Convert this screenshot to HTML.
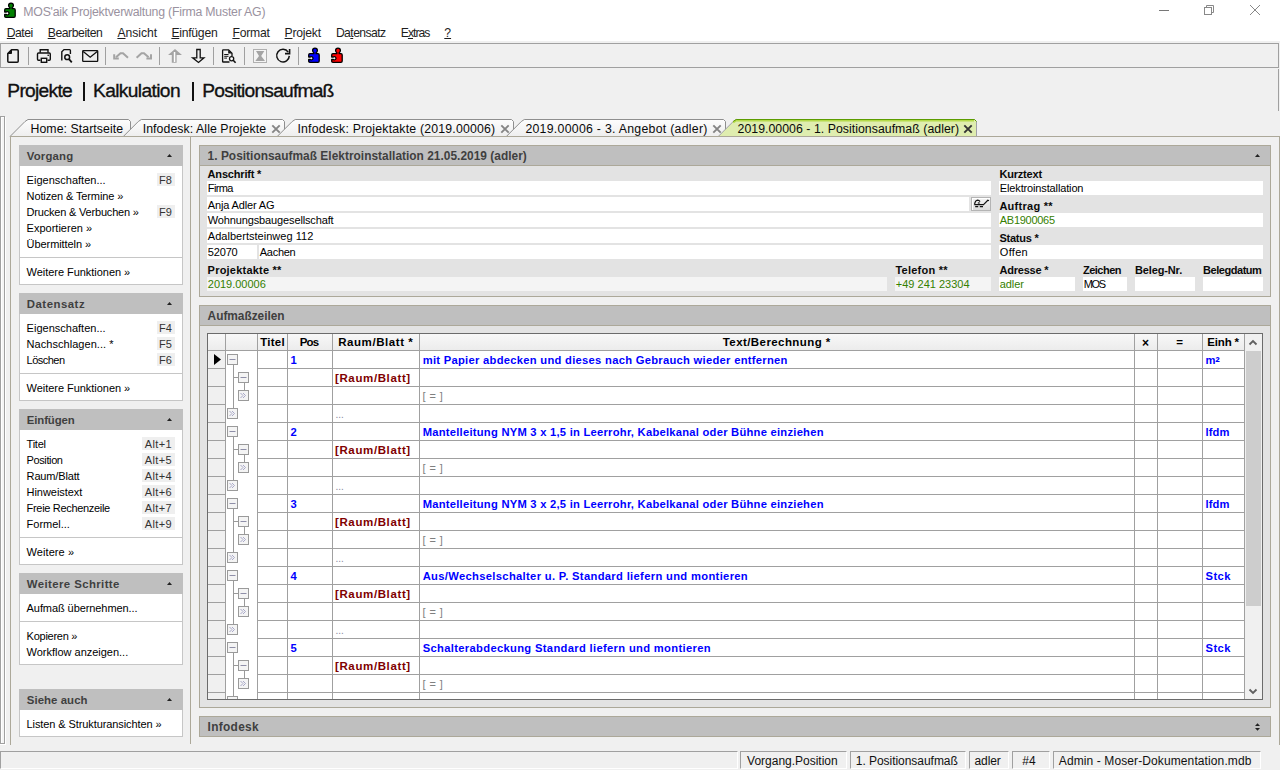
<!DOCTYPE html>
<html><head><meta charset="utf-8"><style>
html,body{margin:0;padding:0;width:1280px;height:770px;overflow:hidden;background:#f0f0f0;position:relative}
.t{position:absolute;white-space:nowrap;font-family:"Liberation Sans",sans-serif}
.r{position:absolute}
u{text-decoration:underline;text-underline-offset:1px;text-decoration-thickness:1px}
</style></head><body>
<div class="r" style="left:0px;top:0px;width:1280px;height:41px;background:#fff"></div>
<svg class="r" style="left:3px;top:2px;" width="14" height="17" viewBox="0 0 14 17"><path d="M1.7 7.9Q1.7 6.7 2.9 6.7H6.8V5.6Q5.6 5 5.6 3.5A2.4 2.4 0 0 1 10.4 3.5Q10.4 5 9.2 5.6V6.7H11Q12.2 6.7 12.2 7.9V14.1Q12.2 15.3 11 15.3H2.9Q1.7 15.3 1.7 14.1V12.5H3.4A1.6 1.6 0 1 0 3.4 10H1.7Z" fill="#008000" stroke="#000" stroke-width="1.3" stroke-linejoin="round"/></svg>
<div class="t " style="left:23.3px;top:6px;font-size:12.3px;line-height:12.3px;font-weight:400;color:#9a92a0;letter-spacing:-0.228px;">MOS'aik Projektverwaltung (Firma Muster AG)</div>
<div class="r" style="left:1159px;top:10px;width:10px;height:1px;background:#777"></div>
<svg class="r" style="left:1203px;top:4px;" width="12" height="12" viewBox="0 0 12 12"><rect x="1.5" y="3.5" width="7" height="7" fill="none" stroke="#888"/><path d="M3.5 3.5v-2h7v7h-2" fill="none" stroke="#888"/></svg>
<svg class="r" style="left:1249px;top:4px;" width="12" height="12" viewBox="0 0 12 12"><path d="M1 1l10 10M11 1l-10 10" stroke="#888" stroke-width="1"/></svg>
<div class="t " style="left:6.8px;top:27px;font-size:12.2px;line-height:12.2px;font-weight:400;color:#1e1e1e;letter-spacing:-0.538px;"><u>D</u>atei</div>
<div class="t " style="left:47.699999999999996px;top:27px;font-size:12.2px;line-height:12.2px;font-weight:400;color:#1e1e1e;letter-spacing:-0.428px;"><u>B</u>earbeiten</div>
<div class="t " style="left:117.39999999999999px;top:27px;font-size:12.2px;line-height:12.2px;font-weight:400;color:#1e1e1e;letter-spacing:-0.028px;"><u>A</u>nsicht</div>
<div class="t " style="left:171.4px;top:27px;font-size:12.2px;line-height:12.2px;font-weight:400;color:#1e1e1e;letter-spacing:-0.261px;"><u>E</u>infügen</div>
<div class="t " style="left:232.4px;top:27px;font-size:12.2px;line-height:12.2px;font-weight:400;color:#1e1e1e;letter-spacing:-0.222px;"><u>F</u>ormat</div>
<div class="t " style="left:284.6px;top:27px;font-size:12.2px;line-height:12.2px;font-weight:400;color:#1e1e1e;letter-spacing:-0.24px;"><u>P</u>rojekt</div>
<div class="t " style="left:335.90000000000003px;top:27px;font-size:12.2px;line-height:12.2px;font-weight:400;color:#1e1e1e;letter-spacing:-0.572px;">Da<u>t</u>ensatz</div>
<div class="t " style="left:400.8px;top:27px;font-size:12.2px;line-height:12.2px;font-weight:400;color:#1e1e1e;letter-spacing:-1.009px;">E<u>x</u>tras</div>
<div class="t " style="left:444.3px;top:27px;font-size:12.2px;line-height:12.2px;font-weight:400;color:#1e1e1e;"><u>?</u></div>
<div class="r" style="left:0px;top:42px;width:1280px;height:728px;background:#f0f0f0"></div>
<div class="r" style="left:0px;top:43px;width:1279px;height:25px;border:1px solid #a0a0a0;box-sizing:border-box;background:#f0f0f0"></div>
<div class="r" style="left:28px;top:47px;width:1px;height:18px;background:#a0a0a0"></div>
<div class="r" style="left:105px;top:47px;width:1px;height:18px;background:#a0a0a0"></div>
<div class="r" style="left:159px;top:47px;width:1px;height:18px;background:#a0a0a0"></div>
<div class="r" style="left:213px;top:47px;width:1px;height:18px;background:#a0a0a0"></div>
<div class="r" style="left:244px;top:47px;width:1px;height:18px;background:#a0a0a0"></div>
<div class="r" style="left:298px;top:47px;width:1px;height:18px;background:#a0a0a0"></div>
<svg class="r" style="left:0;top:43px" width="360" height="25" viewBox="0 43 360 25"><path d="M11.5 49.8H17.2Q18.2 49.8 18.2 50.8V61.2Q18.2 62.2 17.2 62.2H8.8Q7.8 62.2 7.8 61.2V53.5Z" fill="none" stroke="#111" stroke-width="1.5" stroke-linejoin="round"/><path d="M8 53.5L11.5 50V53.5Z" fill="#111" stroke="#111" stroke-width="1"/><path d="M40.2 52.8V49.8H48V52.8" fill="none" stroke="#111" stroke-width="1.4"/><path d="M40.5 60.2H38.5Q37.5 60.2 37.5 59.2V54Q37.5 53 38.5 53H49.3Q50.3 53 50.3 54V59.2Q50.3 60.2 49.3 60.2H47.5" fill="none" stroke="#111" stroke-width="1.4"/><rect x="41.3" y="58.3" width="5.4" height="4" fill="none" stroke="#111" stroke-width="1.4"/><rect x="47.5" y="54.6" width="1.4" height="1.4" fill="#111"/><path d="M62.5 59.8H61.8V51.8L64 49.6H69.6Q70.4 49.6 70.4 50.4V54" fill="none" stroke="#111" stroke-width="1.4"/><circle cx="67.2" cy="57.2" r="2.4" fill="none" stroke="#111" stroke-width="1.5"/><path d="M69 59.2L71.8 62.3" stroke="#111" stroke-width="1.8"/><rect x="82.7" y="50.7" width="15" height="10.6" rx="0.6" fill="none" stroke="#111" stroke-width="1.3"/><path d="M83.2 51.4L90.2 57.2L97.2 51.4" fill="none" stroke="#111" stroke-width="1.3"/><path d="M116 57.2L120.5 53.2H123L128 57.8" fill="none" stroke="#a4a4a4" stroke-width="2"/><path d="M114.2 54.2V58.6H118.8" fill="none" stroke="#a4a4a4" stroke-width="2"/><path d="M136.6 57.8L141.5 53.2H144L148.6 57.2" fill="none" stroke="#a4a4a4" stroke-width="2"/><path d="M151 54.2V58.6H146.4" fill="none" stroke="#a4a4a4" stroke-width="2"/><path d="M175 49L182 55H176.6V62.8H171.8V55H168Z" fill="#a4a4a4"/><rect x="173.8" y="52" width="1.5" height="10" fill="#fff"/><path d="M196.8 49.5H200.2V57.8H204L198.5 62.5L192.6 57.8H196.8Z" fill="none" stroke="#111" stroke-width="1.3" stroke-linejoin="miter"/><path d="M229.5 62H223.2Q222.6 62 222.6 61.4V50.4Q222.6 49.8 223.2 49.8H228.6L232 53.2V56" fill="none" stroke="#111" stroke-width="1.3"/><path d="M228.2 50V53.6H232Z" fill="#111"/><path d="M224.2 54.5H228.5M224.2 56.3H228.5M224.2 58.1H227" stroke="#111" stroke-width="1"/><circle cx="231.6" cy="58.7" r="2.1" fill="#fff" stroke="#111" stroke-width="1.3"/><path d="M233.2 60.3L235.6 62.8" stroke="#111" stroke-width="1.6"/><rect x="253.5" y="49.5" width="13" height="13" fill="#f4f4f4" stroke="#b0b0b0"/><path d="M256 51H264.3L261.2 56L265 61H255.3L259 56Z" fill="#a4a4a4"/><path d="M289.3 55.9A6.3 6.3 0 1 1 288.2 52.1" fill="none" stroke="#111" stroke-width="1.5"/><path d="M289.6 49V53.6H285" fill="none" stroke="#111" stroke-width="1.6"/></svg>
<svg class="r" style="left:307px;top:47px;" width="14" height="17" viewBox="0 0 14 17"><path d="M1.7 7.9Q1.7 6.7 2.9 6.7H6.8V5.6Q5.6 5 5.6 3.5A2.4 2.4 0 0 1 10.4 3.5Q10.4 5 9.2 5.6V6.7H11Q12.2 6.7 12.2 7.9V14.1Q12.2 15.3 11 15.3H2.9Q1.7 15.3 1.7 14.1V12.5H3.4A1.6 1.6 0 1 0 3.4 10H1.7Z" fill="#0000ff" stroke="#000" stroke-width="1.3" stroke-linejoin="round"/></svg>
<svg class="r" style="left:330px;top:47px;" width="14" height="17" viewBox="0 0 14 17"><path d="M1.7 7.9Q1.7 6.7 2.9 6.7H6.8V5.6Q5.6 5 5.6 3.5A2.4 2.4 0 0 1 10.4 3.5Q10.4 5 9.2 5.6V6.7H11Q12.2 6.7 12.2 7.9V14.1Q12.2 15.3 11 15.3H2.9Q1.7 15.3 1.7 14.1V12.5H3.4A1.6 1.6 0 1 0 3.4 10H1.7Z" fill="#ff0000" stroke="#000" stroke-width="1.3" stroke-linejoin="round"/></svg>
<div class="t " style="left:7.3px;top:81px;font-size:19.2px;line-height:19.2px;font-weight:400;color:#111;letter-spacing:-0.699px;-webkit-text-stroke:0.35px #111;">Projekte</div>
<div class="r" style="left:83px;top:82px;width:2px;height:19px;background:#111"></div>
<div class="t " style="left:93px;top:81px;font-size:19.2px;line-height:19.2px;font-weight:400;color:#111;letter-spacing:-0.628px;-webkit-text-stroke:0.35px #111;">Kalkulation</div>
<div class="r" style="left:192px;top:82px;width:2px;height:19px;background:#111"></div>
<div class="t " style="left:202.3px;top:81px;font-size:19.2px;line-height:19.2px;font-weight:400;color:#111;letter-spacing:-0.779px;-webkit-text-stroke:0.35px #111;">Positionsaufmaß</div>
<div class="r" style="left:1278px;top:69px;width:1px;height:42px;background:#a0a0a0"></div>
<div class="r" style="left:0px;top:116px;width:5px;height:628px;border:1px solid #a0a0a0;box-sizing:border-box;background:#f4f4f4;box-shadow:inset 1px 1px 0 #fff"></div>
<div class="r" style="left:5px;top:117px;width:1px;height:628px;background:#fff"></div>
<div class="r" style="left:0px;top:744px;width:6px;height:1px;background:#fff"></div>
<div class="r" style="left:10px;top:136px;width:1270px;height:609px;border-left:1px solid #aca899;border-top:1px solid #aca899;border-right:1px solid #aca899;box-sizing:border-box;background:#f0f0f0"></div>
<div class="r" style="left:190px;top:137px;width:1px;height:607px;background:#aca899"></div>
<svg class="r" style="left:9px;top:116px" width="124" height="21" viewBox="0 0 124 21"><defs><linearGradient id="g9" x1="0" y1="0" x2="0" y2="1"><stop offset="0" stop-color="#fdfdfd"/><stop offset="1" stop-color="#eeeeee"/></linearGradient></defs><path d="M1.00 20.50 L16.00 5.50 L19.00 3.50 H119.50 L121.50 5.50 V20.50" fill="url(#g9)" stroke="#8e8e8e" stroke-width="1"/></svg>
<div class="t " style="left:30.5px;top:123px;font-size:12.3px;line-height:12.3px;font-weight:400;color:#0a0a0a;letter-spacing:0.067px;">Home: Startseite</div>
<svg class="r" style="left:122px;top:116px" width="165" height="21" viewBox="0 0 165 21"><defs><linearGradient id="g122" x1="0" y1="0" x2="0" y2="1"><stop offset="0" stop-color="#fdfdfd"/><stop offset="1" stop-color="#eeeeee"/></linearGradient></defs><path d="M1.30 20.50 L16.30 5.50 L19.30 3.50 H160.50 L162.50 5.50 V20.50" fill="url(#g122)" stroke="#8e8e8e" stroke-width="1"/></svg>
<div class="t " style="left:142.7px;top:123px;font-size:12.3px;line-height:12.3px;font-weight:400;color:#0a0a0a;letter-spacing:0.074px;">Infodesk: Alle Projekte</div>
<svg class="r" style="left:270.5px;top:123.5px;" width="10" height="10" viewBox="0 0 10 10"><path d="M1.3 1.3l7.4 7.4M8.7 1.3l-7.4 7.4" stroke="#858585" stroke-width="1.9"/></svg>
<svg class="r" style="left:276px;top:116px" width="240" height="21" viewBox="0 0 240 21"><defs><linearGradient id="g276" x1="0" y1="0" x2="0" y2="1"><stop offset="0" stop-color="#fdfdfd"/><stop offset="1" stop-color="#eeeeee"/></linearGradient></defs><path d="M1.20 20.50 L16.20 5.50 L19.20 3.50 H235.50 L237.50 5.50 V20.50" fill="url(#g276)" stroke="#8e8e8e" stroke-width="1"/></svg>
<div class="t " style="left:297.4px;top:123px;font-size:12.3px;line-height:12.3px;font-weight:400;color:#0a0a0a;letter-spacing:0.193px;">Infodesk: Projektakte (2019.00006)</div>
<svg class="r" style="left:499.5px;top:123.5px;" width="10" height="10" viewBox="0 0 10 10"><path d="M1.3 1.3l7.4 7.4M8.7 1.3l-7.4 7.4" stroke="#858585" stroke-width="1.9"/></svg>
<svg class="r" style="left:505px;top:116px" width="223" height="21" viewBox="0 0 223 21"><defs><linearGradient id="g505" x1="0" y1="0" x2="0" y2="1"><stop offset="0" stop-color="#fdfdfd"/><stop offset="1" stop-color="#eeeeee"/></linearGradient></defs><path d="M1.30 20.50 L16.30 5.50 L19.30 3.50 H218.50 L220.50 5.50 V20.50" fill="url(#g505)" stroke="#8e8e8e" stroke-width="1"/></svg>
<div class="t " style="left:525.4px;top:123px;font-size:12.3px;line-height:12.3px;font-weight:400;color:#0a0a0a;letter-spacing:0.278px;">2019.00006 - 3. Angebot (adler)</div>
<svg class="r" style="left:711.5px;top:123.5px;" width="10" height="10" viewBox="0 0 10 10"><path d="M1.3 1.3l7.4 7.4M8.7 1.3l-7.4 7.4" stroke="#858585" stroke-width="1.9"/></svg>
<svg class="r" style="left:717px;top:116px" width="262" height="21" viewBox="0 0 262 21"><path d="M1.20 20.50 L16.20 5.50 L19.20 3.50 H257.50 L259.50 5.50 V20.50" fill="#dfedaf" stroke="#a0a0a8" stroke-width="1"/><path d="M16.20 6.50 L19.20 4.50 H257.00" fill="none" stroke="#b4da4a" stroke-width="2"/><path d="M16.20 5.50 L19.20 3.50 H257.50 L259.50 5.50" fill="none" stroke="#5c9c00" stroke-width="1"/></svg>
<div class="t " style="left:737.5px;top:123px;font-size:12.3px;line-height:12.3px;font-weight:400;color:#0a0a0a;letter-spacing:0.037px;">2019.00006 - 1. Positionsaufmaß (adler)</div>
<svg class="r" style="left:962.5px;top:123.5px;" width="10" height="10" viewBox="0 0 10 10"><path d="M1.3 1.3l7.4 7.4M8.7 1.3l-7.4 7.4" stroke="#333" stroke-width="1.9"/></svg>
<div class="r" style="left:10px;top:136px;width:1270px;height:1px;background:#aca899"></div>
<div class="r" style="left:19px;top:145px;width:164px;height:21px;background:#bfbfbf"></div>
<div class="t " style="left:26.8px;top:151px;font-size:11.4px;line-height:11.4px;font-weight:700;color:#3f3f3f;letter-spacing:0.173px;">Vorgang</div>
<svg class="r" style="left:166px;top:153px;" width="7" height="5" viewBox="0 0 7 5"><path d="M1 4L3.5 1L6 4z" fill="#222"/></svg>
<div class="r" style="left:19px;top:166px;width:164px;height:119px;background:#fff;border:1px solid #c6c6c6;border-top:none;box-sizing:border-box"></div>
<div class="r" style="left:157px;top:173px;width:18px;height:13px;background:#efefef"></div>
<div class="t " style="left:159px;top:175px;font-size:11px;line-height:11px;font-weight:400;color:#333;">F8</div>
<div class="t " style="left:26.6px;top:175px;font-size:11px;line-height:11px;font-weight:400;color:#000;letter-spacing:0.007px;">Eigenschaften...</div>
<div class="t " style="left:26.6px;top:191px;font-size:11px;line-height:11px;font-weight:400;color:#000;letter-spacing:-0.12px;">Notizen &amp; Termine »</div>
<div class="r" style="left:157px;top:205px;width:18px;height:13px;background:#efefef"></div>
<div class="t " style="left:159px;top:207px;font-size:11px;line-height:11px;font-weight:400;color:#333;">F9</div>
<div class="t " style="left:26.6px;top:207px;font-size:11px;line-height:11px;font-weight:400;color:#000;letter-spacing:-0.194px;">Drucken &amp; Verbuchen »</div>
<div class="t " style="left:26.6px;top:223px;font-size:11px;line-height:11px;font-weight:400;color:#000;letter-spacing:0.005px;">Exportieren »</div>
<div class="t " style="left:26.6px;top:239px;font-size:11px;line-height:11px;font-weight:400;color:#000;letter-spacing:-0.077px;">Übermitteln »</div>
<div class="r" style="left:20px;top:257px;width:162px;height:1px;background:#c6c6c6"></div>
<div class="t " style="left:26.6px;top:267px;font-size:11px;line-height:11px;font-weight:400;color:#000;letter-spacing:-0.04px;">Weitere Funktionen »</div>
<div class="r" style="left:19px;top:293px;width:164px;height:21px;background:#bfbfbf"></div>
<div class="t " style="left:26.8px;top:299px;font-size:11.4px;line-height:11.4px;font-weight:700;color:#3f3f3f;letter-spacing:0.498px;">Datensatz</div>
<svg class="r" style="left:166px;top:301px;" width="7" height="5" viewBox="0 0 7 5"><path d="M1 4L3.5 1L6 4z" fill="#222"/></svg>
<div class="r" style="left:19px;top:314px;width:164px;height:87px;background:#fff;border:1px solid #c6c6c6;border-top:none;box-sizing:border-box"></div>
<div class="r" style="left:157px;top:321px;width:18px;height:13px;background:#efefef"></div>
<div class="t " style="left:159px;top:323px;font-size:11px;line-height:11px;font-weight:400;color:#333;">F4</div>
<div class="t " style="left:26.6px;top:323px;font-size:11px;line-height:11px;font-weight:400;color:#000;letter-spacing:0.007px;">Eigenschaften...</div>
<div class="r" style="left:157px;top:337px;width:18px;height:13px;background:#efefef"></div>
<div class="t " style="left:159px;top:339px;font-size:11px;line-height:11px;font-weight:400;color:#333;">F5</div>
<div class="t " style="left:26.6px;top:339px;font-size:11px;line-height:11px;font-weight:400;color:#000;letter-spacing:0.043px;">Nachschlagen... *</div>
<div class="r" style="left:157px;top:353px;width:18px;height:13px;background:#efefef"></div>
<div class="t " style="left:159px;top:355px;font-size:11px;line-height:11px;font-weight:400;color:#333;">F6</div>
<div class="t " style="left:26.6px;top:355px;font-size:11px;line-height:11px;font-weight:400;color:#000;letter-spacing:-0.516px;">Löschen</div>
<div class="r" style="left:20px;top:373px;width:162px;height:1px;background:#c6c6c6"></div>
<div class="t " style="left:26.6px;top:383px;font-size:11px;line-height:11px;font-weight:400;color:#000;letter-spacing:-0.04px;">Weitere Funktionen »</div>
<div class="r" style="left:19px;top:409px;width:164px;height:21px;background:#bfbfbf"></div>
<div class="t " style="left:26.8px;top:415px;font-size:11.4px;line-height:11.4px;font-weight:700;color:#3f3f3f;letter-spacing:-0.119px;">Einfügen</div>
<svg class="r" style="left:166px;top:417px;" width="7" height="5" viewBox="0 0 7 5"><path d="M1 4L3.5 1L6 4z" fill="#222"/></svg>
<div class="r" style="left:19px;top:430px;width:164px;height:135px;background:#fff;border:1px solid #c6c6c6;border-top:none;box-sizing:border-box"></div>
<div class="r" style="left:142px;top:437px;width:33px;height:13px;background:#efefef"></div>
<div class="t " style="left:144.7px;top:439px;font-size:11px;line-height:11px;font-weight:400;color:#333;letter-spacing:0.402px;">Alt+1</div>
<div class="t " style="left:26.6px;top:439px;font-size:11px;line-height:11px;font-weight:400;color:#000;letter-spacing:-0.244px;">Titel</div>
<div class="r" style="left:142px;top:453px;width:33px;height:13px;background:#efefef"></div>
<div class="t " style="left:144.7px;top:455px;font-size:11px;line-height:11px;font-weight:400;color:#333;letter-spacing:0.402px;">Alt+5</div>
<div class="t " style="left:26.6px;top:455px;font-size:11px;line-height:11px;font-weight:400;color:#000;letter-spacing:-0.392px;">Position</div>
<div class="r" style="left:142px;top:469px;width:33px;height:13px;background:#efefef"></div>
<div class="t " style="left:144.7px;top:471px;font-size:11px;line-height:11px;font-weight:400;color:#333;letter-spacing:0.402px;">Alt+4</div>
<div class="t " style="left:26.6px;top:471px;font-size:11px;line-height:11px;font-weight:400;color:#000;letter-spacing:-0.158px;">Raum/Blatt</div>
<div class="r" style="left:142px;top:485px;width:33px;height:13px;background:#efefef"></div>
<div class="t " style="left:144.7px;top:487px;font-size:11px;line-height:11px;font-weight:400;color:#333;letter-spacing:0.402px;">Alt+6</div>
<div class="t " style="left:26.6px;top:487px;font-size:11px;line-height:11px;font-weight:400;color:#000;letter-spacing:-0.055px;">Hinweistext</div>
<div class="r" style="left:142px;top:501px;width:33px;height:13px;background:#efefef"></div>
<div class="t " style="left:144.7px;top:503px;font-size:11px;line-height:11px;font-weight:400;color:#333;letter-spacing:0.402px;">Alt+7</div>
<div class="t " style="left:26.6px;top:503px;font-size:11px;line-height:11px;font-weight:400;color:#000;letter-spacing:-0.316px;">Freie Rechenzeile</div>
<div class="r" style="left:142px;top:517px;width:33px;height:13px;background:#efefef"></div>
<div class="t " style="left:144.7px;top:519px;font-size:11px;line-height:11px;font-weight:400;color:#333;letter-spacing:0.402px;">Alt+9</div>
<div class="t " style="left:26.6px;top:519px;font-size:11px;line-height:11px;font-weight:400;color:#000;letter-spacing:-0.013px;">Formel...</div>
<div class="r" style="left:20px;top:537px;width:162px;height:1px;background:#c6c6c6"></div>
<div class="t " style="left:26.6px;top:547px;font-size:11px;line-height:11px;font-weight:400;color:#000;letter-spacing:0.066px;">Weitere »</div>
<div class="r" style="left:19px;top:573px;width:164px;height:21px;background:#bfbfbf"></div>
<div class="t " style="left:26.8px;top:579px;font-size:11.4px;line-height:11.4px;font-weight:700;color:#3f3f3f;letter-spacing:0.406px;">Weitere Schritte</div>
<svg class="r" style="left:166px;top:581px;" width="7" height="5" viewBox="0 0 7 5"><path d="M1 4L3.5 1L6 4z" fill="#222"/></svg>
<div class="r" style="left:19px;top:594px;width:164px;height:71px;background:#fff;border:1px solid #c6c6c6;border-top:none;box-sizing:border-box"></div>
<div class="t " style="left:26.6px;top:603px;font-size:11px;line-height:11px;font-weight:400;color:#000;letter-spacing:-0.08px;">Aufmaß übernehmen...</div>
<div class="r" style="left:20px;top:621px;width:162px;height:1px;background:#c6c6c6"></div>
<div class="t " style="left:26.6px;top:631px;font-size:11px;line-height:11px;font-weight:400;color:#000;letter-spacing:-0.258px;">Kopieren »</div>
<div class="t " style="left:26.6px;top:647px;font-size:11px;line-height:11px;font-weight:400;color:#000;letter-spacing:-0.016px;">Workflow anzeigen...</div>
<div class="r" style="left:19px;top:689px;width:164px;height:21px;background:#bfbfbf"></div>
<div class="t " style="left:26.8px;top:695px;font-size:11.4px;line-height:11.4px;font-weight:700;color:#3f3f3f;letter-spacing:0.062px;">Siehe auch</div>
<svg class="r" style="left:166px;top:697px;" width="7" height="5" viewBox="0 0 7 5"><path d="M1 4L3.5 1L6 4z" fill="#222"/></svg>
<div class="r" style="left:19px;top:710px;width:164px;height:27px;background:#fff;border:1px solid #c6c6c6;border-top:none;box-sizing:border-box"></div>
<div class="t " style="left:26.6px;top:719px;font-size:11px;line-height:11px;font-weight:400;color:#000;letter-spacing:-0.095px;">Listen &amp; Strukturansichten »</div>
<div class="r" style="left:199px;top:145px;width:1072px;height:152px;border:1px solid #aca899;box-sizing:border-box;background:#e3e3e3"></div>
<div class="r" style="left:200px;top:146px;width:1070px;height:20px;background:#bfbfbf;border-bottom:1px solid #aca899;box-sizing:border-box"></div>
<div class="t " style="left:207.6px;top:151px;font-size:11.9px;line-height:11.9px;font-weight:700;color:#3f3f3f;letter-spacing:0.024px;">1. Positionsaufmaß Elektroinstallation 21.05.2019 (adler)</div>
<svg class="r" style="left:1254px;top:153px;" width="7" height="5" viewBox="0 0 7 5"><path d="M1 4L3.5 1L6 4z" fill="#222"/></svg>
<div class="t " style="left:207.6px;top:169px;font-size:11px;line-height:11px;font-weight:700;color:#0a0a0a;letter-spacing:-0.183px;">Anschrift *</div>
<div class="r" style="left:207px;top:181px;width:784px;height:14px;background:#fff"></div>
<div class="t " style="left:207.8px;top:183px;font-size:11px;line-height:11px;font-weight:400;color:#000;letter-spacing:-0.627px;">Firma</div>
<div class="r" style="left:207px;top:197px;width:762px;height:14px;background:#fff"></div>
<div class="t " style="left:207.8px;top:200px;font-size:11px;line-height:11px;font-weight:400;color:#000;letter-spacing:-0.142px;">Anja Adler AG</div>
<div class="r" style="left:971px;top:197px;width:20px;height:14px;background:linear-gradient(#f4f4f4,#dcdcdc);border:1px solid #b4b4b4;box-shadow:inset 1px 1px 0 #fff;box-sizing:border-box"></div>
<svg class="r" style="left:971px;top:197px;" width="20" height="14" viewBox="0 0 20 14"><path d="M3.5 7.5Q4.3 3.4 6.6 3.2Q8.2 3.2 9 4.6M7 6.4Q7.7 5.4 8.6 6.4M3.4 7.6H13M4.2 9.6H7.2M8.8 9.6H12M12.8 7.4L16.8 3.3L18 3.8" fill="none" stroke="#111" stroke-width="1.2"/></svg>
<div class="r" style="left:207px;top:213px;width:784px;height:14px;background:#fff"></div>
<div class="t " style="left:207.8px;top:215px;font-size:11px;line-height:11px;font-weight:400;color:#000;letter-spacing:-0.134px;">Wohnungsbaugesellschaft</div>
<div class="r" style="left:207px;top:229px;width:784px;height:14px;background:#fff"></div>
<div class="t " style="left:207.8px;top:231px;font-size:11px;line-height:11px;font-weight:400;color:#000;letter-spacing:0.027px;">Adalbertsteinweg 112</div>
<div class="r" style="left:207px;top:245px;width:50px;height:14px;background:#fff"></div>
<div class="t " style="left:207.8px;top:247px;font-size:11px;line-height:11px;font-weight:400;color:#000;letter-spacing:-0.173px;">52070</div>
<div class="r" style="left:259px;top:245px;width:732px;height:14px;background:#fff"></div>
<div class="t " style="left:259.8px;top:247px;font-size:11px;line-height:11px;font-weight:400;color:#000;letter-spacing:-0.283px;">Aachen</div>
<div class="t " style="left:207.6px;top:265px;font-size:11px;line-height:11px;font-weight:700;color:#0a0a0a;letter-spacing:0.22px;">Projektakte **</div>
<div class="r" style="left:207px;top:277px;width:680px;height:14px;background:#f4f4f4"></div>
<div class="t " style="left:207.8px;top:279px;font-size:11px;line-height:11px;font-weight:400;color:#358000;letter-spacing:-0.014px;">2019.00006</div>
<div class="t " style="left:895.4px;top:265px;font-size:11px;line-height:11px;font-weight:700;color:#0a0a0a;letter-spacing:0.253px;">Telefon **</div>
<div class="r" style="left:895px;top:277px;width:96px;height:14px;background:#f4f4f4"></div>
<div class="t " style="left:895.8px;top:279px;font-size:11px;line-height:11px;font-weight:400;color:#358000;letter-spacing:0.007px;">+49 241 23304</div>
<div class="t " style="left:999.4px;top:169px;font-size:11px;line-height:11px;font-weight:700;color:#0a0a0a;letter-spacing:-0.188px;">Kurztext</div>
<div class="r" style="left:999px;top:181px;width:264px;height:14px;background:#fff"></div>
<div class="t " style="left:999.8px;top:183px;font-size:11px;line-height:11px;font-weight:400;color:#000;letter-spacing:-0.14px;">Elektroinstallation</div>
<div class="t " style="left:999.4px;top:201px;font-size:11px;line-height:11px;font-weight:700;color:#0a0a0a;letter-spacing:0.274px;">Auftrag **</div>
<div class="r" style="left:999px;top:213px;width:264px;height:14px;background:#fff"></div>
<div class="t " style="left:999.8px;top:215px;font-size:11px;line-height:11px;font-weight:400;color:#358000;letter-spacing:-0.287px;">AB1900065</div>
<div class="t " style="left:999.4px;top:233px;font-size:11px;line-height:11px;font-weight:700;color:#0a0a0a;letter-spacing:-0.224px;">Status *</div>
<div class="r" style="left:999px;top:245px;width:264px;height:14px;background:#fff"></div>
<div class="t " style="left:999.8px;top:247px;font-size:11px;line-height:11px;font-weight:400;color:#000;letter-spacing:0.295px;">Offen</div>
<div class="t " style="left:999.4px;top:265px;font-size:11px;line-height:11px;font-weight:700;color:#0a0a0a;letter-spacing:-0.196px;">Adresse *</div>
<div class="r" style="left:999px;top:277px;width:76px;height:14px;background:#fff"></div>
<div class="t " style="left:999.8px;top:279px;font-size:11px;line-height:11px;font-weight:400;color:#358000;letter-spacing:-0.117px;">adler</div>
<div class="t " style="left:1083px;top:265px;font-size:11px;line-height:11px;font-weight:700;color:#0a0a0a;letter-spacing:-0.513px;">Zeichen</div>
<div class="r" style="left:1083px;top:277px;width:44px;height:14px;background:#fff"></div>
<div class="t " style="left:1083.8px;top:279px;font-size:11px;line-height:11px;font-weight:400;color:#000;letter-spacing:-1.381px;">MOS</div>
<div class="t " style="left:1135px;top:265px;font-size:11px;line-height:11px;font-weight:700;color:#0a0a0a;letter-spacing:-0.137px;">Beleg-Nr.</div>
<div class="r" style="left:1135px;top:277px;width:60px;height:14px;background:#fff"></div>
<div class="t " style="left:1203px;top:265px;font-size:11px;line-height:11px;font-weight:700;color:#0a0a0a;letter-spacing:-0.452px;">Belegdatum</div>
<div class="r" style="left:1203px;top:277px;width:60px;height:14px;background:#fff"></div>
<div class="r" style="left:199px;top:305px;width:1072px;height:403px;border:1px solid #aca899;box-sizing:border-box;background:#e3e3e3"></div>
<div class="r" style="left:200px;top:306px;width:1070px;height:20px;background:#bfbfbf;border-bottom:1px solid #aca899;box-sizing:border-box"></div>
<div class="t " style="left:207.6px;top:311px;font-size:11.9px;line-height:11.9px;font-weight:700;color:#3f3f3f;letter-spacing:-0.028px;">Aufmaßzeilen</div>
<div class="r" style="left:207px;top:333px;width:1056px;height:367px;background:#fff;border:1px solid #6b6b6b;box-sizing:border-box"></div>
<div class="r" style="left:208px;top:334px;width:1054px;height:365px;overflow:hidden"><div class="r" style="left:-208px;top:-334px;width:1280px;height:770px">
<div class="r" style="left:208px;top:334px;width:1036px;height:16px;background:linear-gradient(#f8f8f8,#ececec)"></div>
<div class="r" style="left:208px;top:350px;width:1036px;height:1px;background:#a0a0a0"></div>
<div class="r" style="left:208px;top:351px;width:17px;height:348px;background:#f0f0f0"></div>
<div class="r" style="left:208px;top:368px;width:17px;height:1px;background:#a0a0a0"></div>
<div class="r" style="left:257px;top:368px;width:987px;height:1px;background:#a0a0a0"></div>
<div class="r" style="left:208px;top:386px;width:17px;height:1px;background:#a0a0a0"></div>
<div class="r" style="left:257px;top:386px;width:987px;height:1px;background:#a0a0a0"></div>
<div class="r" style="left:208px;top:404px;width:17px;height:1px;background:#a0a0a0"></div>
<div class="r" style="left:257px;top:404px;width:987px;height:1px;background:#a0a0a0"></div>
<div class="r" style="left:208px;top:422px;width:17px;height:1px;background:#a0a0a0"></div>
<div class="r" style="left:257px;top:422px;width:987px;height:1px;background:#a0a0a0"></div>
<div class="r" style="left:208px;top:440px;width:17px;height:1px;background:#a0a0a0"></div>
<div class="r" style="left:257px;top:440px;width:987px;height:1px;background:#a0a0a0"></div>
<div class="r" style="left:208px;top:458px;width:17px;height:1px;background:#a0a0a0"></div>
<div class="r" style="left:257px;top:458px;width:987px;height:1px;background:#a0a0a0"></div>
<div class="r" style="left:208px;top:476px;width:17px;height:1px;background:#a0a0a0"></div>
<div class="r" style="left:257px;top:476px;width:987px;height:1px;background:#a0a0a0"></div>
<div class="r" style="left:208px;top:494px;width:17px;height:1px;background:#a0a0a0"></div>
<div class="r" style="left:257px;top:494px;width:987px;height:1px;background:#a0a0a0"></div>
<div class="r" style="left:208px;top:512px;width:17px;height:1px;background:#a0a0a0"></div>
<div class="r" style="left:257px;top:512px;width:987px;height:1px;background:#a0a0a0"></div>
<div class="r" style="left:208px;top:530px;width:17px;height:1px;background:#a0a0a0"></div>
<div class="r" style="left:257px;top:530px;width:987px;height:1px;background:#a0a0a0"></div>
<div class="r" style="left:208px;top:548px;width:17px;height:1px;background:#a0a0a0"></div>
<div class="r" style="left:257px;top:548px;width:987px;height:1px;background:#a0a0a0"></div>
<div class="r" style="left:208px;top:566px;width:17px;height:1px;background:#a0a0a0"></div>
<div class="r" style="left:257px;top:566px;width:987px;height:1px;background:#a0a0a0"></div>
<div class="r" style="left:208px;top:584px;width:17px;height:1px;background:#a0a0a0"></div>
<div class="r" style="left:257px;top:584px;width:987px;height:1px;background:#a0a0a0"></div>
<div class="r" style="left:208px;top:602px;width:17px;height:1px;background:#a0a0a0"></div>
<div class="r" style="left:257px;top:602px;width:987px;height:1px;background:#a0a0a0"></div>
<div class="r" style="left:208px;top:620px;width:17px;height:1px;background:#a0a0a0"></div>
<div class="r" style="left:257px;top:620px;width:987px;height:1px;background:#a0a0a0"></div>
<div class="r" style="left:208px;top:638px;width:17px;height:1px;background:#a0a0a0"></div>
<div class="r" style="left:257px;top:638px;width:987px;height:1px;background:#a0a0a0"></div>
<div class="r" style="left:208px;top:656px;width:17px;height:1px;background:#a0a0a0"></div>
<div class="r" style="left:257px;top:656px;width:987px;height:1px;background:#a0a0a0"></div>
<div class="r" style="left:208px;top:674px;width:17px;height:1px;background:#a0a0a0"></div>
<div class="r" style="left:257px;top:674px;width:987px;height:1px;background:#a0a0a0"></div>
<div class="r" style="left:208px;top:692px;width:17px;height:1px;background:#a0a0a0"></div>
<div class="r" style="left:257px;top:692px;width:987px;height:1px;background:#a0a0a0"></div>
<div class="r" style="left:225px;top:334px;width:1px;height:365px;background:#a0a0a0"></div>
<div class="r" style="left:257px;top:334px;width:1px;height:365px;background:#a0a0a0"></div>
<div class="r" style="left:287px;top:334px;width:1px;height:365px;background:#a0a0a0"></div>
<div class="r" style="left:332px;top:334px;width:1px;height:365px;background:#a0a0a0"></div>
<div class="r" style="left:419px;top:334px;width:1px;height:365px;background:#a0a0a0"></div>
<div class="r" style="left:1134px;top:334px;width:1px;height:365px;background:#a0a0a0"></div>
<div class="r" style="left:1157px;top:334px;width:1px;height:365px;background:#a0a0a0"></div>
<div class="r" style="left:1202px;top:334px;width:1px;height:365px;background:#a0a0a0"></div>
<div class="r" style="left:1244px;top:334px;width:1px;height:365px;background:#a0a0a0"></div>
<div class="t " style="left:260.3px;top:337px;font-size:11.5px;line-height:11.5px;font-weight:700;color:#000;letter-spacing:0.241px;">Titel</div>
<div class="t" style="left:287px;width:45px;text-align:center;top:337px;font-size:11.5px;line-height:11.5px;font-weight:700;color:#000;letter-spacing:-0.797px;text-indent:-0.797px;">Pos</div>
<div class="t" style="left:332px;width:87px;text-align:center;top:337px;font-size:11.5px;line-height:11.5px;font-weight:700;color:#000;letter-spacing:0.566px;text-indent:0.566px;">Raum/Blatt *</div>
<div class="t" style="left:419px;width:715px;text-align:center;top:337px;font-size:11.5px;line-height:11.5px;font-weight:700;color:#000;letter-spacing:0.422px;text-indent:0.422px;">Text/Berechnung *</div>
<div class="t" style="left:1134px;width:23px;text-align:center;top:337px;font-size:12px;line-height:12px;font-weight:700;color:#000;">×</div>
<div class="t" style="left:1157px;width:45px;text-align:center;top:337px;font-size:11.5px;line-height:11.5px;font-weight:700;color:#000;">=</div>
<div class="t " style="left:1207.3px;top:337px;font-size:11.5px;line-height:11.5px;font-weight:700;color:#000;letter-spacing:-0.159px;">Einh *</div>
<div class="r" style="left:233px;top:365px;width:1px;height:44px;background:#9a9a9a"></div>
<div class="r" style="left:233px;top:377px;width:5px;height:1px;background:#9a9a9a"></div>
<div class="r" style="left:244px;top:383px;width:1px;height:7px;background:#9a9a9a"></div>
<svg class="r" style="left:227px;top:354px;" width="11" height="11" viewBox="0 0 11 11"><rect x="0.5" y="0.5" width="10" height="10" fill="#f4f4f4" stroke="#9a9a9a"/><path d="M2.5 5.5h6" stroke="#8f8fa8" stroke-width="1"/></svg>
<svg class="r" style="left:238px;top:372px;" width="11" height="11" viewBox="0 0 11 11"><rect x="0.5" y="0.5" width="10" height="10" fill="#f4f4f4" stroke="#9a9a9a"/><path d="M2.5 5.5h6" stroke="#8f8fa8" stroke-width="1"/></svg>
<svg class="r" style="left:238px;top:390px;" width="11" height="11" viewBox="0 0 11 11"><rect x="0.5" y="0.5" width="10" height="10" fill="#f4f4f4" stroke="#9a9a9a"/><path d="M2.5 3l2.5 2.5l-2.5 2.5M5 3l2.5 2.5l-2.5 2.5" fill="none" stroke="#a8a8c8" stroke-width="1"/></svg>
<svg class="r" style="left:227px;top:408px;" width="11" height="11" viewBox="0 0 11 11"><rect x="0.5" y="0.5" width="10" height="10" fill="#f4f4f4" stroke="#9a9a9a"/><path d="M2.5 3l2.5 2.5l-2.5 2.5M5 3l2.5 2.5l-2.5 2.5" fill="none" stroke="#a8a8c8" stroke-width="1"/></svg>
<div class="t " style="left:290.5px;top:355px;font-size:11.2px;line-height:11.2px;font-weight:700;color:#0000ff;">1</div>
<div class="t " style="left:422.7px;top:355px;font-size:11.2px;line-height:11.2px;font-weight:700;color:#0000ff;letter-spacing:0.286px;">mit Papier abdecken und dieses nach Gebrauch wieder entfernen</div>
<div class="t " style="left:1205.5px;top:355px;font-size:11.2px;line-height:11.2px;font-weight:700;color:#0000ff;">m</div>
<div class="t " style="left:1215.2px;top:355px;font-size:13.5px;line-height:13.5px;font-weight:700;color:#0000ff;">²</div>
<div class="t " style="left:335px;top:373px;font-size:11.5px;line-height:11.5px;font-weight:700;color:#800000;letter-spacing:0.62px;">[Raum/Blatt]</div>
<div class="t " style="left:422.5px;top:391px;font-size:11px;line-height:11px;font-weight:400;color:#808080;letter-spacing:0.386px;">[ = ]</div>
<div class="t " style="left:335.5px;top:410px;font-size:10px;line-height:10px;font-weight:400;color:#8888a0;">...</div>
<div class="r" style="left:233px;top:437px;width:1px;height:44px;background:#9a9a9a"></div>
<div class="r" style="left:233px;top:449px;width:5px;height:1px;background:#9a9a9a"></div>
<div class="r" style="left:244px;top:455px;width:1px;height:7px;background:#9a9a9a"></div>
<svg class="r" style="left:227px;top:426px;" width="11" height="11" viewBox="0 0 11 11"><rect x="0.5" y="0.5" width="10" height="10" fill="#f4f4f4" stroke="#9a9a9a"/><path d="M2.5 5.5h6" stroke="#8f8fa8" stroke-width="1"/></svg>
<svg class="r" style="left:238px;top:444px;" width="11" height="11" viewBox="0 0 11 11"><rect x="0.5" y="0.5" width="10" height="10" fill="#f4f4f4" stroke="#9a9a9a"/><path d="M2.5 5.5h6" stroke="#8f8fa8" stroke-width="1"/></svg>
<svg class="r" style="left:238px;top:462px;" width="11" height="11" viewBox="0 0 11 11"><rect x="0.5" y="0.5" width="10" height="10" fill="#f4f4f4" stroke="#9a9a9a"/><path d="M2.5 3l2.5 2.5l-2.5 2.5M5 3l2.5 2.5l-2.5 2.5" fill="none" stroke="#a8a8c8" stroke-width="1"/></svg>
<svg class="r" style="left:227px;top:480px;" width="11" height="11" viewBox="0 0 11 11"><rect x="0.5" y="0.5" width="10" height="10" fill="#f4f4f4" stroke="#9a9a9a"/><path d="M2.5 3l2.5 2.5l-2.5 2.5M5 3l2.5 2.5l-2.5 2.5" fill="none" stroke="#a8a8c8" stroke-width="1"/></svg>
<div class="t " style="left:290.5px;top:427px;font-size:11.2px;line-height:11.2px;font-weight:700;color:#0000ff;">2</div>
<div class="t " style="left:422.7px;top:427px;font-size:11.2px;line-height:11.2px;font-weight:700;color:#0000ff;letter-spacing:0.25px;">Mantelleitung NYM 3 x 1,5 in Leerrohr, Kabelkanal oder Bühne einziehen</div>
<div class="t " style="left:1205.5px;top:427px;font-size:11.2px;line-height:11.2px;font-weight:700;color:#0000ff;letter-spacing:0.125px;">lfdm</div>
<div class="t " style="left:335px;top:445px;font-size:11.5px;line-height:11.5px;font-weight:700;color:#800000;letter-spacing:0.62px;">[Raum/Blatt]</div>
<div class="t " style="left:422.5px;top:463px;font-size:11px;line-height:11px;font-weight:400;color:#808080;letter-spacing:0.386px;">[ = ]</div>
<div class="t " style="left:335.5px;top:482px;font-size:10px;line-height:10px;font-weight:400;color:#8888a0;">...</div>
<div class="r" style="left:233px;top:509px;width:1px;height:44px;background:#9a9a9a"></div>
<div class="r" style="left:233px;top:521px;width:5px;height:1px;background:#9a9a9a"></div>
<div class="r" style="left:244px;top:527px;width:1px;height:7px;background:#9a9a9a"></div>
<svg class="r" style="left:227px;top:498px;" width="11" height="11" viewBox="0 0 11 11"><rect x="0.5" y="0.5" width="10" height="10" fill="#f4f4f4" stroke="#9a9a9a"/><path d="M2.5 5.5h6" stroke="#8f8fa8" stroke-width="1"/></svg>
<svg class="r" style="left:238px;top:516px;" width="11" height="11" viewBox="0 0 11 11"><rect x="0.5" y="0.5" width="10" height="10" fill="#f4f4f4" stroke="#9a9a9a"/><path d="M2.5 5.5h6" stroke="#8f8fa8" stroke-width="1"/></svg>
<svg class="r" style="left:238px;top:534px;" width="11" height="11" viewBox="0 0 11 11"><rect x="0.5" y="0.5" width="10" height="10" fill="#f4f4f4" stroke="#9a9a9a"/><path d="M2.5 3l2.5 2.5l-2.5 2.5M5 3l2.5 2.5l-2.5 2.5" fill="none" stroke="#a8a8c8" stroke-width="1"/></svg>
<svg class="r" style="left:227px;top:552px;" width="11" height="11" viewBox="0 0 11 11"><rect x="0.5" y="0.5" width="10" height="10" fill="#f4f4f4" stroke="#9a9a9a"/><path d="M2.5 3l2.5 2.5l-2.5 2.5M5 3l2.5 2.5l-2.5 2.5" fill="none" stroke="#a8a8c8" stroke-width="1"/></svg>
<div class="t " style="left:290.5px;top:499px;font-size:11.2px;line-height:11.2px;font-weight:700;color:#0000ff;">3</div>
<div class="t " style="left:422.7px;top:499px;font-size:11.2px;line-height:11.2px;font-weight:700;color:#0000ff;letter-spacing:0.25px;">Mantelleitung NYM 3 x 2,5 in Leerrohr, Kabelkanal oder Bühne einziehen</div>
<div class="t " style="left:1205.5px;top:499px;font-size:11.2px;line-height:11.2px;font-weight:700;color:#0000ff;letter-spacing:0.125px;">lfdm</div>
<div class="t " style="left:335px;top:517px;font-size:11.5px;line-height:11.5px;font-weight:700;color:#800000;letter-spacing:0.62px;">[Raum/Blatt]</div>
<div class="t " style="left:422.5px;top:535px;font-size:11px;line-height:11px;font-weight:400;color:#808080;letter-spacing:0.386px;">[ = ]</div>
<div class="t " style="left:335.5px;top:554px;font-size:10px;line-height:10px;font-weight:400;color:#8888a0;">...</div>
<div class="r" style="left:233px;top:581px;width:1px;height:44px;background:#9a9a9a"></div>
<div class="r" style="left:233px;top:593px;width:5px;height:1px;background:#9a9a9a"></div>
<div class="r" style="left:244px;top:599px;width:1px;height:7px;background:#9a9a9a"></div>
<svg class="r" style="left:227px;top:570px;" width="11" height="11" viewBox="0 0 11 11"><rect x="0.5" y="0.5" width="10" height="10" fill="#f4f4f4" stroke="#9a9a9a"/><path d="M2.5 5.5h6" stroke="#8f8fa8" stroke-width="1"/></svg>
<svg class="r" style="left:238px;top:588px;" width="11" height="11" viewBox="0 0 11 11"><rect x="0.5" y="0.5" width="10" height="10" fill="#f4f4f4" stroke="#9a9a9a"/><path d="M2.5 5.5h6" stroke="#8f8fa8" stroke-width="1"/></svg>
<svg class="r" style="left:238px;top:606px;" width="11" height="11" viewBox="0 0 11 11"><rect x="0.5" y="0.5" width="10" height="10" fill="#f4f4f4" stroke="#9a9a9a"/><path d="M2.5 3l2.5 2.5l-2.5 2.5M5 3l2.5 2.5l-2.5 2.5" fill="none" stroke="#a8a8c8" stroke-width="1"/></svg>
<svg class="r" style="left:227px;top:624px;" width="11" height="11" viewBox="0 0 11 11"><rect x="0.5" y="0.5" width="10" height="10" fill="#f4f4f4" stroke="#9a9a9a"/><path d="M2.5 3l2.5 2.5l-2.5 2.5M5 3l2.5 2.5l-2.5 2.5" fill="none" stroke="#a8a8c8" stroke-width="1"/></svg>
<div class="t " style="left:290.5px;top:571px;font-size:11.2px;line-height:11.2px;font-weight:700;color:#0000ff;">4</div>
<div class="t " style="left:422.7px;top:571px;font-size:11.2px;line-height:11.2px;font-weight:700;color:#0000ff;letter-spacing:0.333px;">Aus/Wechselschalter u. P. Standard liefern und montieren</div>
<div class="t " style="left:1205.5px;top:571px;font-size:11.2px;line-height:11.2px;font-weight:700;color:#0000ff;letter-spacing:0.453px;">Stck</div>
<div class="t " style="left:335px;top:589px;font-size:11.5px;line-height:11.5px;font-weight:700;color:#800000;letter-spacing:0.62px;">[Raum/Blatt]</div>
<div class="t " style="left:422.5px;top:607px;font-size:11px;line-height:11px;font-weight:400;color:#808080;letter-spacing:0.386px;">[ = ]</div>
<div class="t " style="left:335.5px;top:626px;font-size:10px;line-height:10px;font-weight:400;color:#8888a0;">...</div>
<div class="r" style="left:233px;top:653px;width:1px;height:44px;background:#9a9a9a"></div>
<div class="r" style="left:233px;top:665px;width:5px;height:1px;background:#9a9a9a"></div>
<div class="r" style="left:244px;top:671px;width:1px;height:7px;background:#9a9a9a"></div>
<svg class="r" style="left:227px;top:642px;" width="11" height="11" viewBox="0 0 11 11"><rect x="0.5" y="0.5" width="10" height="10" fill="#f4f4f4" stroke="#9a9a9a"/><path d="M2.5 5.5h6" stroke="#8f8fa8" stroke-width="1"/></svg>
<svg class="r" style="left:238px;top:660px;" width="11" height="11" viewBox="0 0 11 11"><rect x="0.5" y="0.5" width="10" height="10" fill="#f4f4f4" stroke="#9a9a9a"/><path d="M2.5 5.5h6" stroke="#8f8fa8" stroke-width="1"/></svg>
<svg class="r" style="left:238px;top:678px;" width="11" height="11" viewBox="0 0 11 11"><rect x="0.5" y="0.5" width="10" height="10" fill="#f4f4f4" stroke="#9a9a9a"/><path d="M2.5 3l2.5 2.5l-2.5 2.5M5 3l2.5 2.5l-2.5 2.5" fill="none" stroke="#a8a8c8" stroke-width="1"/></svg>
<svg class="r" style="left:227px;top:696px;" width="11" height="11" viewBox="0 0 11 11"><rect x="0.5" y="0.5" width="10" height="10" fill="#f4f4f4" stroke="#9a9a9a"/><path d="M2.5 3l2.5 2.5l-2.5 2.5M5 3l2.5 2.5l-2.5 2.5" fill="none" stroke="#a8a8c8" stroke-width="1"/></svg>
<div class="t " style="left:290.5px;top:643px;font-size:11.2px;line-height:11.2px;font-weight:700;color:#0000ff;">5</div>
<div class="t " style="left:422.7px;top:643px;font-size:11.2px;line-height:11.2px;font-weight:700;color:#0000ff;letter-spacing:0.332px;">Schalterabdeckung Standard liefern und montieren</div>
<div class="t " style="left:1205.5px;top:643px;font-size:11.2px;line-height:11.2px;font-weight:700;color:#0000ff;letter-spacing:0.453px;">Stck</div>
<div class="t " style="left:335px;top:661px;font-size:11.5px;line-height:11.5px;font-weight:700;color:#800000;letter-spacing:0.62px;">[Raum/Blatt]</div>
<div class="t " style="left:422.5px;top:679px;font-size:11px;line-height:11px;font-weight:400;color:#808080;letter-spacing:0.386px;">[ = ]</div>
<div class="t " style="left:335.5px;top:698px;font-size:10px;line-height:10px;font-weight:400;color:#8888a0;">...</div>
<svg class="r" style="left:214px;top:354px;" width="8" height="12" viewBox="0 0 8 12"><path d="M0 0L7 5.5L0 11z" fill="#000"/></svg>
<div class="r" style="left:1245px;top:334px;width:17px;height:365px;background:#f0f0f0"></div>
<div class="r" style="left:1246px;top:351px;width:15px;height:255px;background:#cdcdcd"></div>
<svg class="r" style="left:1248px;top:338px;" width="10" height="8" viewBox="0 0 10 8"><path d="M1.5 6.5L5 3L8.5 6.5" fill="none" stroke="#606060" stroke-width="1.8"/></svg>
<svg class="r" style="left:1248px;top:688px;" width="10" height="8" viewBox="0 0 10 8"><path d="M1.5 1.5L5 5L8.5 1.5" fill="none" stroke="#606060" stroke-width="1.8"/></svg>
</div></div>
<div class="r" style="left:199px;top:716px;width:1072px;height:21px;border:1px solid #aca899;box-sizing:border-box;background:#bfbfbf"></div>
<div class="t " style="left:207.6px;top:722px;font-size:11.9px;line-height:11.9px;font-weight:700;color:#3f3f3f;letter-spacing:0.299px;">Infodesk</div>
<svg class="r" style="left:1254px;top:722px;" width="7" height="10" viewBox="0 0 7 10"><path d="M1 4L3.5 1.2L6 4zM1 6L3.5 8.8L6 6z" fill="#222"/></svg>
<div class="r" style="left:0px;top:751px;width:738px;height:18px;border-top:1px solid #a0a0a0;border-left:1px solid #a0a0a0;border-right:1px solid #fff;border-bottom:1px solid #fff;box-sizing:border-box"></div>
<div class="r" style="left:740px;top:751px;width:107px;height:18px;border-top:1px solid #a0a0a0;border-left:1px solid #a0a0a0;border-right:1px solid #fff;border-bottom:1px solid #fff;box-sizing:border-box"></div>
<div class="r" style="left:850px;top:751px;width:116px;height:18px;border-top:1px solid #a0a0a0;border-left:1px solid #a0a0a0;border-right:1px solid #fff;border-bottom:1px solid #fff;box-sizing:border-box"></div>
<div class="r" style="left:969px;top:751px;width:40px;height:18px;border-top:1px solid #a0a0a0;border-left:1px solid #a0a0a0;border-right:1px solid #fff;border-bottom:1px solid #fff;box-sizing:border-box"></div>
<div class="r" style="left:1012px;top:751px;width:38px;height:18px;border-top:1px solid #a0a0a0;border-left:1px solid #a0a0a0;border-right:1px solid #fff;border-bottom:1px solid #fff;box-sizing:border-box"></div>
<div class="r" style="left:1053px;top:751px;width:208px;height:18px;border-top:1px solid #a0a0a0;border-left:1px solid #a0a0a0;border-right:1px solid #fff;border-bottom:1px solid #fff;box-sizing:border-box"></div>
<div class="t " style="left:747.1px;top:755px;font-size:12px;line-height:12px;font-weight:400;color:#111;letter-spacing:-0.009px;">Vorgang.Position</div>
<div class="t " style="left:855.8px;top:755px;font-size:12px;line-height:12px;font-weight:400;color:#111;letter-spacing:-0.042px;">1. Positionsaufmaß</div>
<div class="t " style="left:974.5px;top:755px;font-size:12px;line-height:12px;font-weight:400;color:#111;letter-spacing:-0.097px;">adler</div>
<div class="t " style="left:1058.8px;top:755px;font-size:12px;line-height:12px;font-weight:400;color:#111;letter-spacing:0.106px;">Admin - Moser-Dokumentation.mdb</div>
<div class="t " style="left:1022.3px;top:755px;font-size:12px;line-height:12px;font-weight:400;color:#111;">#4</div>
</body></html>
